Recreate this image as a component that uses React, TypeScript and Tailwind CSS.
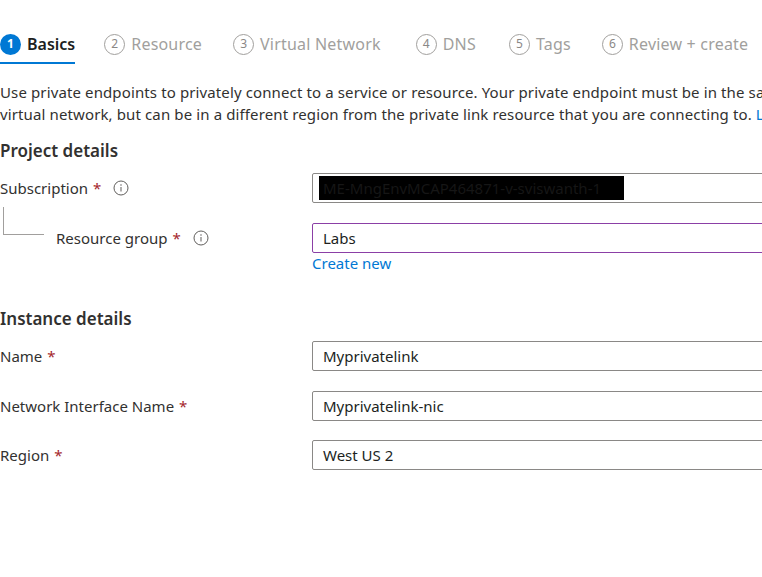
import React from 'react';

const font = { fontFamily: '"Noto Sans", "Open Sans", sans-serif' };

const tabs = [
  { label: 'Basics', gap: '' },
  { label: 'Resource', gap: 'ml-[29px]' },
  { label: 'Virtual Network', gap: 'ml-[31px]' },
  { label: 'DNS', gap: 'ml-[35px]' },
  { label: 'Tags', gap: 'ml-[33px]' },
  { label: 'Review + create', gap: 'ml-[31px]' },
];

const Tabs = () => (
  <div className="flex items-start pt-[33px] h-[65px]">
    {tabs.map((t, i) => {
      const active = i === 0;
      return (
        <div key={t.label} className={`flex flex-col ${t.gap}`}>
          <div className="flex items-center gap-[6px] h-[22px]">
            <span
              className={
                active
                  ? 'w-[21px] h-[21px] rounded-full bg-[#0078d4] text-white text-[12px] font-bold flex items-center justify-center'
                  : 'w-[21px] h-[21px] rounded-full border border-[#a19f9d] text-[#8a8886] text-[12px] flex items-center justify-center'
              }
            >
              {i + 1}
            </span>
            <span
              className={
                active
                  ? 'text-[16px] font-semibold text-[#201f1e] whitespace-nowrap'
                  : 'text-[16px] tracking-[0.2px] text-[#a19f9d] whitespace-nowrap'
              }
            >
              {t.label}
            </span>
          </div>
          {active && <div className="mt-[7px] h-[2px] bg-[#0078d4]" />}
        </div>
      );
    })}
  </div>
);

const Star = () => <span className="text-[#a4262c] ml-[5px]">*</span>;

const Info = () => (
  <svg width="16" height="16" viewBox="0 0 16 16" className="ml-[12px]">
    <circle cx="8" cy="8" r="7" fill="none" stroke="#605e5c" strokeWidth="1" />
    <rect x="7.5" y="7" width="1" height="4.5" fill="#605e5c" />
    <circle cx="8" cy="5" r="0.75" fill="#605e5c" />
  </svg>
);

const Field = ({ value, purple }: { value: React.ReactNode; purple?: boolean }) => (
  <div
    className={
      purple
        ? 'h-[30px] w-[520px] rounded-[2px] border border-[#8b3fa6] flex items-center pl-[10px] text-[15px] text-[#201f1e]'
        : 'h-[30px] w-[520px] rounded-[2px] border border-[#8a8886] flex items-center pl-[10px] text-[15px] text-[#201f1e]'
    }
  >
    {value}
  </div>
);

const Row = ({ label, value, className }: { label: React.ReactNode; value: React.ReactNode; className?: string }) => (
  <div className={`flex items-center ${className ?? ''}`}>
    <div className="w-[312px] flex items-center text-[15px] text-[#323130]">{label}</div>
    {value}
  </div>
);

export default function App() {
  return (
    <div className="w-[762px] h-[577px] overflow-hidden bg-white text-[#323130]" style={font}>
      <div className="w-[1000px]">
        <Tabs />
        <p className="mt-[16px] text-[15px] leading-[22px] tracking-[0.12px] text-[#323130]">
          Use private endpoints to privately connect to a service or resource. Your private endpoint must be in the same region as your
          <br />
          virtual network, but can be in a different region from the private link resource that you are connecting to.{' '}
          <span className="text-[#0078d4]">Learn more</span>
        </p>
        <h2 className="mt-[14px] text-[17px] font-semibold text-[#323130] leading-[24px]">Project details</h2>
        <Row
          className="mt-[10px]"
          label={
            <>
              Subscription
              <Star />
              <Info />
            </>
          }
          value={
            <Field
              value={
                <span className="bg-black text-[#161616] h-[24px] w-[305px] -ml-[4px] flex items-center pl-[4px] whitespace-nowrap">
                  ME-MngEnvMCAP464871-v-sviswanth-1
                </span>
              }
            />
          }
        />
        <div className="flex mt-[20px]">
          <div className="w-[312px] flex items-start">
            <div className="ml-[3px] -mt-[16px] w-[41px] h-[28px] border-l border-b border-[#a19f9d]" />
            <div className="ml-[12px] flex items-center text-[15px] text-[#323130] h-[30px]">
              Resource group
              <Star />
              <Info />
            </div>
          </div>
          <div className="flex flex-col">
            <Field value="Labs" purple />
            <span className="text-[15px] leading-[20px] text-[#0078d4]">Create new</span>
          </div>
        </div>
        <h2 className="mt-[34px] text-[17px] font-semibold text-[#323130] leading-[24px]">Instance details</h2>
        <Row className="mt-[10px]" label={<>Name<Star /></>} value={<Field value="Myprivatelink" />} />
        <Row className="mt-[20px]" label={<>Network Interface Name<Star /></>} value={<Field value="Myprivatelink-nic" />} />
        <Row className="mt-[19px]" label={<>Region<Star /></>} value={<Field value="West US 2" />} />
      </div>
    </div>
  );
}
